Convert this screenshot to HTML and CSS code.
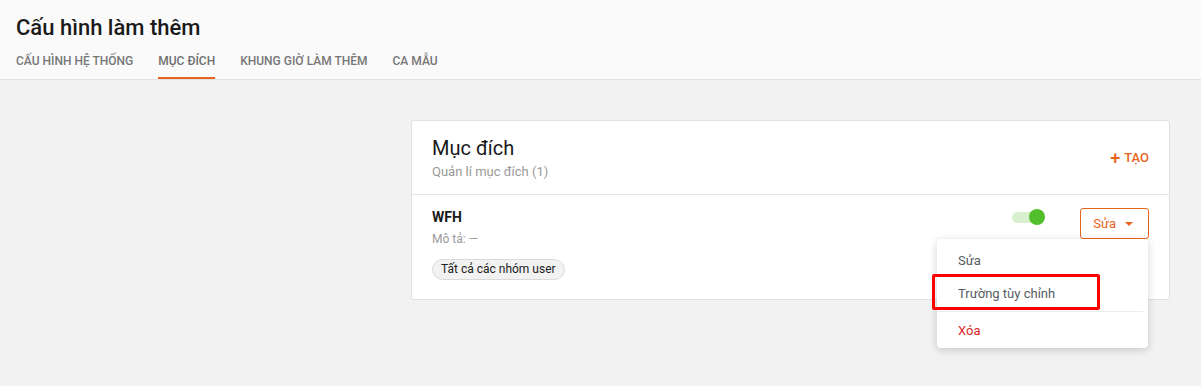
FILE: index.html
```html
<!DOCTYPE html>
<html lang="vi">
<head>
    <meta charset="UTF-8">
    <meta name="viewport" content="width=device-width, initial-scale=1.0">
    <title>Cấu hình làm thêm</title>
    <link rel="stylesheet" href="styles.css">
</head>
<body>
    <div class="header">
        <h1 class="page-title">Cấu hình làm thêm</h1>
        <div class="tabs">
            <a href="#" class="tab">CẤU HÌNH HỆ THỐNG</a>
            <a href="#" class="tab active">MỤC ĐÍCH</a>
            <a href="#" class="tab">KHUNG GIỜ LÀM THÊM</a>
            <a href="#" class="tab">CA MẪU</a>
        </div>
    </div>

    <div class="main">
        <div class="side"></div>
        <div class="card">
            <div class="card-head">
                <div>
                    <div class="card-title">Mục đích</div>
                    <div class="card-sub">Quản lí mục đích (1)</div>
                </div>
                <a href="#" class="create"><span class="plus">+</span> TẠO</a>
            </div>
            <div class="item">
                <div class="item-info">
                    <div class="item-name">WFH</div>
                    <div class="item-desc">Mô tả: —</div>
                    <span class="chip">Tất cả các nhóm user</span>
                </div>
                <div class="item-actions">
                    <div class="toggle"><span class="knob"></span></div>
                    <div class="menu-wrap">
                        <button class="edit-btn">Sửa <span class="caret"></span></button>
                        <div class="dropdown">
                            <div class="dd-item">Sửa</div>
                            <div class="dd-item">Trường tùy chỉnh</div>
                            <div class="dd-line"></div>
                            <div class="dd-item danger">Xóa</div>
                            <div class="highlight"></div>
                        </div>
                    </div>
                </div>
            </div>
        </div>
    </div>
</body>
</html>
```

FILE: styles.css
```css
/* page base */
html, body {
    height: 100%;
}

body {
    margin: 0;
    min-height: 386px;
    background: #f2f2f2;
    font-family: Roboto, "Noto Sans", sans-serif;
    color: #212121;
}

/* top header with tabs */
.header {
    background: #fafafa;
    padding: 14px 16px 0;
    border-bottom: 1px solid #e2e2e2;
}

.page-title {
    margin: 0;
    font-size: 22px;
    line-height: 28px;
    font-weight: 500;
    color: #1a1a1a;
}

.tabs {
    display: flex;
    gap: 25px;
    margin-top: 1px;
}

.tab {
    display: block;
    padding: 10px 0 8px;
    font-size: 12px;
    line-height: 16px;
    font-weight: 500;
    color: #777;
    text-decoration: none;
    border-bottom: 2px solid transparent;
}

.tab.active {
    color: #6f6f6f;
    border-bottom-color: #e8641b;
}

/* content area */
.main {
    display: grid;
    grid-template-columns: 1fr 759px;
    padding: 40px 31px 0;
}

.card {
    background: #fff;
    border: 1px solid #e0e0e0;
    border-radius: 3px;
}

.card-head {
    display: flex;
    justify-content: space-between;
    align-items: center;
    height: 73px;
    padding: 0 20px;
    border-bottom: 1px solid #e6e6e6;
}

.card-title {
    font-size: 20px;
    line-height: 24px;
    color: #1a1a1a;
}

.card-sub {
    font-size: 13px;
    line-height: 16px;
    margin-top: 4px;
    color: #9a9a9a;
}

.create {
    display: flex;
    align-items: center;
    gap: 4px;
    font-size: 13px;
    font-weight: 500;
    color: #e8641b;
    text-decoration: none;
}

.plus {
    font-size: 18px;
    line-height: 16px;
    font-weight: 500;
}

/* purpose row */
.item {
    display: flex;
    justify-content: space-between;
    align-items: flex-start;
    padding: 14px 20px 19px;
}

.item-name {
    font-size: 14px;
    line-height: 17px;
    font-weight: 700;
    color: #1a1a1a;
}

.item-desc {
    font-size: 12px;
    line-height: 16px;
    margin-top: 5px;
    color: #9a9a9a;
}

.chip {
    display: inline-block;
    margin-top: 12px;
    padding: 0 8px;
    height: 19px;
    line-height: 19px;
    font-size: 12px;
    background: #f2f2f2;
    border: 1px solid #dadada;
    border-radius: 11px;
    color: #212121;
}

.item-actions {
    display: flex;
    align-items: flex-start;
    gap: 38px;
}

.toggle {
    position: relative;
    width: 30px;
    height: 11px;
    margin-top: 3px;
    background: #d9f0cf;
    border-radius: 6px;
}

.toggle .knob {
    position: absolute;
    right: -3px;
    top: -3px;
    width: 16px;
    height: 16px;
    border-radius: 50%;
    background: #52be2c;
}

.menu-wrap {
    position: relative;
}

.edit-btn {
    display: flex;
    align-items: center;
    gap: 9px;
    height: 31px;
    margin-top: -1px;
    padding: 0 15px 0 12px;
    background: #fff;
    border: 1px solid #e8641b;
    border-radius: 3px;
    color: #e8641b;
    font-family: Roboto, "Noto Sans", sans-serif;
    font-size: 13px;
}

.caret {
    width: 0;
    height: 0;
    border-left: 4px solid transparent;
    border-right: 4px solid transparent;
    border-top: 4px solid #e8641b;
}

/* dropdown menu */
.dropdown {
    position: absolute;
    right: 1px;
    top: 30px;
    width: 211px;
    padding: 5px 0 1px;
    background: #fff;
    border-radius: 4px;
    box-shadow: 0 2px 8px rgba(0, 0, 0, 0.18);
    z-index: 5;
}

.dd-item {
    height: 33px;
    line-height: 33px;
    padding: 0 21px;
    font-size: 13px;
    color: #555b61;
}

.dd-item.danger {
    color: #d6282b;
}

.dd-line {
    height: 1px;
    margin: 1px 5px 2px 0;
    background: #ececec;
}

/* annotation box */
.highlight {
    position: absolute;
    left: -5px;
    top: 35px;
    width: 162px;
    height: 30px;
    border: 3px solid #ff0000;
    border-radius: 2px;
}
```
